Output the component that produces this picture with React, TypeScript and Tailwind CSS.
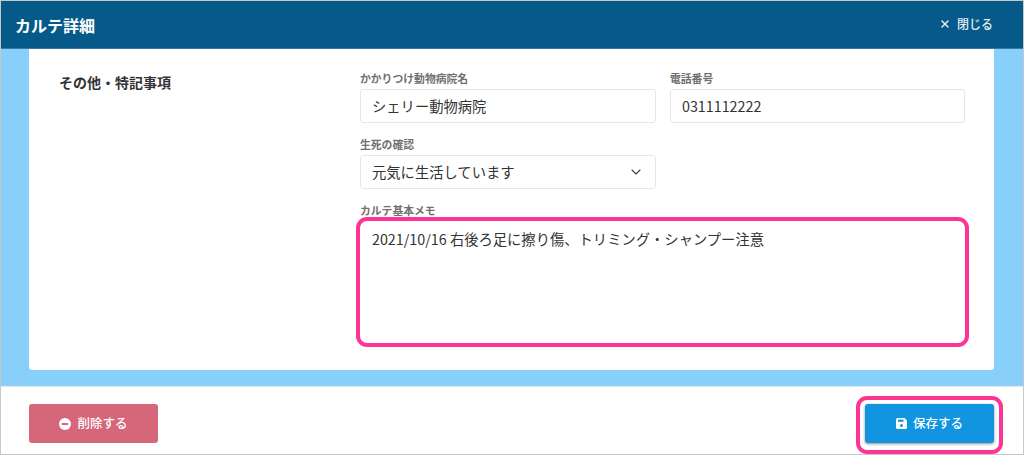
import React from 'react';
import { ChevronDown, X } from 'lucide-react';

const font = "font-['Noto_Sans_CJK_JP','Noto_Sans',sans-serif]";

const Field = ({ label, children }: { label: string; children: React.ReactNode }) => (
  <div className="flex flex-col">
    <label className="h-[16px] text-[10.8px] leading-[10px] font-bold text-[#707070]">{label}</label>
    {children}
  </div>
);

const inputBox =
  'h-[34px] w-full rounded-[3px] border border-[#e6e6e6] bg-white px-[11px] text-[14.3px] leading-[32px] text-[#333333]';

const App: React.FC = () => {
  return (
    <div className={`${font} relative flex h-[455px] w-[1024px] flex-col overflow-hidden border border-[#c8c8c8] bg-white`}>
      <header className="flex h-[48px] shrink-0 items-center justify-between border-b border-[#2f7aa6] bg-[#055a8a] pr-[30px] pl-[14px]">
        <h1 className="text-[16px] font-bold text-white">カルテ詳細</h1>
        <button className="flex items-center gap-[6px] pb-[1px] text-[12px] font-medium text-[#e4edf3]">
          <X size={12} strokeWidth={3} />
          閉じる
        </button>
      </header>

      <main className="h-[337px] shrink-0 bg-[#88cffa] pr-[29px] pb-[16px] pl-[28px]">
        <div className="flex h-full rounded-b-[3px] bg-white pt-[24px] pl-[30px]">
          <h2 className="w-[301px] shrink-0 text-[14px] leading-[18px] font-bold text-[#333333]">その他・特記事項</h2>
          <div className="flex w-[605px] flex-col gap-[16px]">
            <div className="grid grid-cols-[296px_295px] gap-x-[14px]">
              <Field label="かかりつけ動物病院名">
                <div className={inputBox}>シェリー動物病院</div>
              </Field>
              <Field label="電話番号">
                <div className={inputBox}>0311112222</div>
              </Field>
            </div>
            <div className="w-[296px]">
              <Field label="生死の確認">
                <div className={`${inputBox} flex items-center justify-between`}>
                  <span>元気に生活しています</span>
                  <ChevronDown size={16} strokeWidth={1.75} className="text-[#444444]" />
                </div>
              </Field>
            </div>
            <Field label="カルテ基本メモ">
              <div className="h-[118px] w-full bg-white px-[12px] py-[8px] text-[14.3px] leading-[20px] text-[#333333]">
                2021/10/16 右後ろ足に擦り傷、トリミング・シャンプー注意
              </div>
            </Field>
          </div>
        </div>
      </main>

      <footer className="flex flex-1 items-start justify-between border-t border-[#e8e8e8] pt-[17px] pr-[29px] pl-[28px]">
        <button className="flex h-[39px] w-[129px] items-center justify-center gap-[6px] rounded-[3px] bg-[#d6677a] text-[12.5px] font-medium text-white">
          <svg width="12" height="12" viewBox="0 0 12 12">
            <circle cx="6" cy="6" r="6" fill="#ffffff" />
            <rect x="2.8" y="5" width="6.4" height="2" fill="#d6677a" />
          </svg>
          削除する
        </button>
        <button className="flex h-[39px] w-[129px] items-center justify-center gap-[6px] rounded-[3px] bg-[#1195e0] text-[12.5px] font-medium text-white shadow-[0_1px_3px_rgba(0,0,0,0.45)]">
          <svg width="11" height="11" viewBox="0 0 11 11">
            <path d="M1.5 0H8.5L11 2.5V9.5A1.5 1.5 0 0 1 9.5 11H1.5A1.5 1.5 0 0 1 0 9.5V1.5A1.5 1.5 0 0 1 1.5 0Z" fill="#ffffff" />
            <rect x="2" y="1.6" width="5.5" height="2.2" fill="#1195e0" />
            <circle cx="5.5" cy="7.4" r="1.5" fill="#1195e0" />
          </svg>
          保存する
        </button>
      </footer>

      {/* pink annotation frames drawn over the screen */}
      <div className="absolute top-[216px] left-[355px] h-[130px] w-[613px] rounded-[11px] border-[4px] border-[#fd3494]" />
      <div className="absolute top-[395px] left-[855px] h-[58px] w-[147px] rounded-[11px] border-[4px] border-[#fd3494]" />
    </div>
  );
};

export default App;
